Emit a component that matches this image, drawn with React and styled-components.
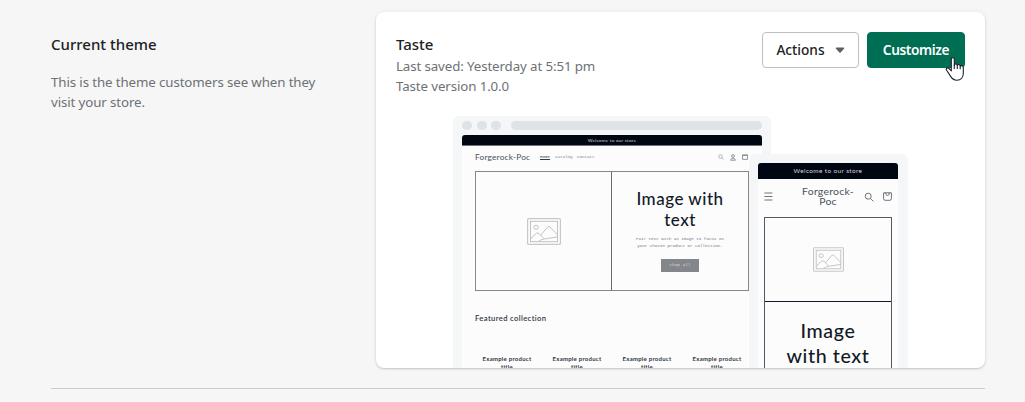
import React from "react";
import styled, { createGlobalStyle } from "styled-components";

const GlobalStyle = createGlobalStyle`
  *, *::before, *::after { box-sizing: border-box; }
  html, body { margin: 0; height: 100%; overflow: hidden; }
  body {
    background: #f6f6f6;
    color: #202223;
    font-family: "Noto Sans", "Open Sans", sans-serif;
    font-size: 14px;
    line-height: 20px;
  }
  h1, h2, h3, p { margin: 0; }
`;

const Page = styled.main`
  position: relative;
  padding: 12px 40px 0 51px;
`;

const Section = styled.section`
  display: flex;
  height: 377px;
  border-bottom: 1px solid #c9cccf;
`;

const Annotation = styled.div`
  flex: 0 0 325px;
  padding-top: 22px;
`;

const Heading = styled.h2`
  font-size: 15px;
  line-height: 20px;
  font-weight: 500;
`;

const Subdued = styled.p`
  color: #6d7175;
  font-size: 13.3px;
  line-height: 20px;
  white-space: nowrap;
  letter-spacing: -0.11px;
`;

const Description = styled.div`
  margin-top: 18px;
`;

const Card = styled.article`
  flex: 1;
  height: 356px;
  background: #fff;
  border-radius: 8px;
  overflow: hidden;
  box-shadow: 0 0 5px rgba(23, 24, 24, 0.06), 0 1px 2px rgba(0, 0, 0, 0.18);
`;

const CardHeader = styled.header`
  display: flex;
  justify-content: space-between;
  height: 104px;
  padding: 20px 20px 0;
`;

const ThemeInfo = styled.div`
  padding-top: 2px;
`;

const ThemeDetails = styled.div`
  margin-top: 2px;
`;

const Buttons = styled.div`
  display: flex;
  gap: 8px;
`;

const Button = styled.button`
  display: flex;
  align-items: center;
  justify-content: center;
  gap: 10px;
  width: ${(p) => (p.$primary ? 98 : 97)}px;
  height: 36px;
  padding: 0;
  border: 1px solid ${(p) => (p.$primary ? "#006e52" : "#babfc3")};
  border-radius: 4px;
  background: ${(p) => (p.$primary ? "#006e52" : "#fff")};
  color: ${(p) => (p.$primary ? "#fff" : "#202223")};
  font: ${(p) => (p.$primary ? 600 : 500)} 13.7px/16px "Noto Sans", sans-serif;
  letter-spacing: ${(p) => (p.$primary ? -0.4 : 0)}px;
`;

const Previews = styled.div`
  display: flex;
  padding-left: 77px;
  font-family: Lato, sans-serif;
  color: #121a26;
`;

const DesktopFrame = styled.div`
  flex: none;
  width: 318px;
  height: 252px;
  padding: 5px 9px 0;
  border-radius: 6px 6px 0 0;
  background: #f4f6f8;
`;

const BrowserBar = styled.div`
  display: flex;
  align-items: center;
  gap: 4.6px;
  height: 9px;
  margin-bottom: 5px;
`;

const Dot = styled.span`
  width: 10px;
  height: 9.5px;
  border-radius: 50%;
  background: #dfe3e8;
`;

const AddressBar = styled.span`
  flex: 1;
  height: 9px;
  margin-left: 5px;
  border-radius: 5px;
  background: #dfe3e8;
`;

const Screen = styled.div`
  height: 100%;
  border-radius: 3px 3px 0 0;
  background: #fcfcfd;
  overflow: hidden;
`;

const Announcement = styled.div`
  height: ${(p) => p.$height}px;
  background: #000712;
  color: #d5d8dc;
  text-align: center;
  font-size: ${(p) => p.$size}px;
  line-height: ${(p) => p.$height}px;
  letter-spacing: ${(p) => p.$track}px;
  border-bottom: ${(p) => (p.$edge ? "1px solid #70757d" : "0")};
`;

const DesktopNav = styled.nav`
  display: flex;
  align-items: center;
  height: 25px;
  padding: 0 14px 3px 13px;
`;

const DesktopLogo = styled.span`
  width: 65px;
  color: #4a505a;
  font-size: 8.3px;
  line-height: 10px;
  letter-spacing: 0.2px;
`;

const NavLink = styled.span`
  width: ${(p) => p.$width}px;
  color: ${(p) => (p.$active ? "#353b45" : "#7f848b")};
  font: 4.2px/6px "Liberation Mono", monospace;
  text-decoration: ${(p) => (p.$active ? "underline" : "none")};
`;

const NavIcons = styled.span`
  display: flex;
  align-items: center;
  gap: ${(p) => p.$gap}px;
  margin-left: auto;
  justify-self: end;
  color: ${(p) => p.$color};
`;

const Banner = styled.div`
  display: grid;
  grid-template-columns: 136px 1fr;
  width: 274px;
  height: 120px;
  margin-left: 13px;
  border: 1px solid #85888e;
`;

const BannerMedia = styled.div`
  display: flex;
  align-items: center;
  justify-content: center;
  border-right: ${(p) => (p.$split ? "1px solid #656971" : "0")};
  color: #b9bbbe;
`;

const BannerText = styled.div`
  display: flex;
  flex-direction: column;
  align-items: center;
  padding-top: 16px;
  text-align: center;
`;

const BannerTitle = styled.h3`
  font-size: ${(p) => p.$size}px;
  line-height: ${(p) => p.$line}px;
  font-weight: 500;
  letter-spacing: ${(p) => p.$track}px;
  white-space: nowrap;
`;

const BannerCopy = styled.p`
  margin-top: 6px;
  color: #74787f;
  font: 4.2px/7.4px "Liberation Mono", monospace;
  white-space: nowrap;
`;

const ShopButton = styled.span`
  width: 38px;
  height: 13px;
  margin-top: 8px;
  background: #83868a;
  color: #d8dadc;
  font: 4.2px/13px "Liberation Mono", monospace;
  letter-spacing: 0.15px;
`;

const Featured = styled.h3`
  margin: 22px 0 0 13px;
  color: #303641;
  font-size: 7.6px;
  line-height: 10px;
  font-weight: 600;
  letter-spacing: 0.38px;
`;

const Products = styled.div`
  display: grid;
  grid-template-columns: repeat(4, 70px);
  margin: 32px 0 0 10px;
`;

const Product = styled.p`
  color: #303641;
  font-size: 6px;
  line-height: 8px;
  font-weight: 700;
  letter-spacing: 0.25px;
  text-align: center;
`;

const MobileFrame = styled.div`
  position: relative;
  flex: none;
  width: 159px;
  height: 214px;
  margin: 38px 0 0 -22px;
  padding: 9px 10px 0 9px;
  border-radius: 6px 6px 0 0;
  background: #f4f6f8;
`;

const MobileHeader = styled.div`
  display: grid;
  grid-template-columns: 35px 1fr 35px;
  align-items: center;
  height: 38px;
  padding: 0 6px 3px;
`;

const MobileLogo = styled.span`
  padding-bottom: 1px;
  color: #4a505a;
  font-size: 10.4px;
  line-height: 10px;
  letter-spacing: 0.28px;
  text-align: center;
  white-space: nowrap;
`;

const MobileBanner = styled.div`
  width: 128px;
  height: 170px;
  margin-left: 6px;
  border: 1px solid #555963;
`;

const MobileMedia = styled(BannerMedia)`
  height: 84px;
  border-bottom: 1px solid #121826;
`;

const MobileText = styled.div`
  padding-top: 16px;
  text-align: center;
`;

const PointerLayer = styled.svg`
  position: absolute;
  left: 945px;
  top: 56px;
`;

const Caret = () => (
  <svg width="10" height="6" viewBox="0 0 10 6" aria-hidden="true">
    <path d="M1.6.5h6.8c.7 0 1 .7.6 1.2L5.8 5.2a1 1 0 0 1-1.6 0L1 1.700C.6 1.200.9.5 1.600.5Z" fill="#5c5f62" />
  </svg>
);

const SearchIcon = ({ size }) => (
  <svg width={size} height={size} viewBox="0 0 10 10" fill="none" stroke="currentColor" strokeWidth="0.9">
    <circle cx="4.200" cy="4.200" r="3" />
    <path d="M6.400 6.400 9.300 9.300" />
  </svg>
);

const AccountIcon = () => (
  <svg width="6" height="7" viewBox="0 0 6 7" fill="none" stroke="currentColor" strokeWidth="0.8">
    <circle cx="3" cy="2" r="1.400" />
    <path d="M.5 6.200C.6 3.900 5.400 3.900 5.500 6.200Z" />
  </svg>
);

const SmallBagIcon = () => (
  <svg width="6" height="6" viewBox="0 0 6 6" fill="none" stroke="currentColor" strokeWidth="0.8">
    <path d="M.5.8h5v4.600h-5ZM.5 1.500h5" />
  </svg>
);

const BagIcon = () => (
  <svg width="9" height="9" viewBox="0 0 9 9" fill="none" stroke="currentColor" strokeWidth="0.9">
    <path d="M.6.8h7.800v5.900q0 1.600-1.600 1.600H2.200Q.6 8.300.6 6.700ZM2.700.8q0 2.700 1.800 2.700T6.300.8" />
  </svg>
);

const MenuIcon = () => (
  <svg width="9" height="9" viewBox="0 0 9 9" stroke="#5d626a" strokeWidth="0.9">
    <path d="M.4 1h8M.4 4.500h8M.4 8h8" />
  </svg>
);

const ImagePlaceholder = ({ width, height }) => (
  <svg width={width} height={height} viewBox="0 0 34 27" fill="none" stroke="currentColor" strokeWidth="0.9">
    <rect x=".6" y=".6" width="32.800" height="25.800" rx="1" stroke="#c6c8ca" strokeWidth="1.200" />
    <rect x="3.500" y="3.300" width="27" height="20.400" />
    <ellipse cx="9" cy="9.300" rx="2.400" ry="2" />
    <path d="M3.500 20.800 9.500 15.200 11.800 15.200 17 20.600M13.500 17.300 21 8.600 22.500 8.600 30.500 16.800M11.500 23.300C16 20.200 21 20.800 30.500 18.800" />
  </svg>
);

const Pointer = () => (
  <PointerLayer width="20" height="26" viewBox="0 0 20 26">
    <path
      d="M6.300 14.800V3.300C6.300 1 9.300 1 9.300 3.300V9.200C9.800 7.200 12.300 7.500 12.300 9.500 12.900 7.900 15.200 8.300 15.200 10.300 16.200 9 18.300 9.800 18.300 11.600V17.200C18.300 21.400 15.700 24.200 12 24.200 9.300 24.200 7.500 23.200 5.800 20.600L1.600 14.300C.4 12.400 2.500 11.200 4 12.500Z"
      fill="#fff"
      stroke="#1c1f2b"
      strokeWidth="1.100"
      strokeLinejoin="round"
    />
    <path d="M9.300 9V13M12.300 9.500V13M15.200 10.300V13.200" fill="none" stroke="#1c1f2b" strokeWidth="1.100" />
  </PointerLayer>
);

const DesktopPreview = () => (
  <DesktopFrame>
    <BrowserBar>
      <Dot />
      <Dot />
      <Dot />
      <AddressBar />
    </BrowserBar>
    <Screen>
      <Announcement $height={11} $size={4.6} $track={0.25} $edge>Welcome to our store</Announcement>
      <DesktopNav>
        <DesktopLogo>Forgerock-Poc</DesktopLogo>
        <NavLink $width={15} $active>Home</NavLink>
        <NavLink $width={22}>Catalog</NavLink>
        <NavLink $width={20}>Contact</NavLink>
        <NavIcons $gap={6} $color="#7b7f86">
          <SearchIcon size={6} />
          <AccountIcon />
          <SmallBagIcon />
        </NavIcons>
      </DesktopNav>
      <Banner>
        <BannerMedia $split>
          <ImagePlaceholder width={34} height={27} />
        </BannerMedia>
        <BannerText>
          <BannerTitle $size={17} $line={21} $track={0.5}>Image with<br />text</BannerTitle>
          <BannerCopy>Pair text with an image to focus on<br />your chosen product or collection.</BannerCopy>
          <ShopButton>Shop all</ShopButton>
        </BannerText>
      </Banner>
      <Featured>Featured collection</Featured>
      <Products>
        {[1, 2, 3, 4].map((id) => (
          <Product key={id}>Example product<br />title</Product>
        ))}
      </Products>
    </Screen>
  </DesktopFrame>
);

const MobilePreview = () => (
  <MobileFrame>
    <Screen>
      <Announcement $height={16} $size={6.4} $track={0.4}>Welcome to our store</Announcement>
      <MobileHeader>
        <MenuIcon />
        <MobileLogo>Forgerock-<br />Poc</MobileLogo>
        <NavIcons $gap={9} $color="#5d626a">
          <SearchIcon size={10} />
          <BagIcon />
        </NavIcons>
      </MobileHeader>
      <MobileBanner>
        <MobileMedia>
          <ImagePlaceholder width={31} height={25} />
        </MobileMedia>
        <MobileText>
          <BannerTitle $size={19.6} $line={25} $track={0.6}>Image<br />with text</BannerTitle>
        </MobileText>
      </MobileBanner>
    </Screen>
  </MobileFrame>
);

export default function App() {
  return (
    <Page>
      <GlobalStyle />
      <Section>
        <Annotation>
          <Heading>Current theme</Heading>
          <Description>
            <Subdued>This is the theme customers see when they</Subdued>
            <Subdued>visit your store.</Subdued>
          </Description>
        </Annotation>
        <Card>
          <CardHeader>
            <ThemeInfo>
              <Heading>Taste</Heading>
              <ThemeDetails>
                <Subdued>Last saved: Yesterday at 5:51 pm</Subdued>
                <Subdued>Taste version 1.0.0</Subdued>
              </ThemeDetails>
            </ThemeInfo>
            <Buttons>
              <Button type="button">Actions<Caret /></Button>
              <Button type="button" $primary>Customize</Button>
            </Buttons>
          </CardHeader>
          <Previews>
            <DesktopPreview />
            <MobilePreview />
          </Previews>
        </Card>
      </Section>
      <Pointer />
    </Page>
  );
}
